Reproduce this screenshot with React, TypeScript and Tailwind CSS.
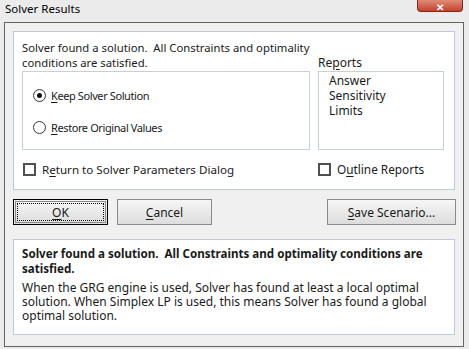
import React from "react";

const Key = ({ children }: { children: React.ReactNode }) => <span className="underline underline-offset-[2px]">{children}</span>;

const Radio = ({ checked, children }: { checked?: boolean; children: React.ReactNode }) => (
  <div className="flex h-[15px] items-center gap-[5px]">
    <div className="flex h-[13px] w-[13px] items-center justify-center rounded-full border-[1.5px] border-[#333] bg-white">
      {checked && <div className="h-[5px] w-[5px] rounded-full bg-[#111]" />}
    </div>
    <span className="text-[11px] tracking-[-0.4px]">{children}</span>
  </div>
);

const Checkbox = ({ children, size }: { children: React.ReactNode; size: string }) => (
  <div className="flex h-[13px] items-center gap-[6px]">
    <div className="h-[13px] w-[13px] border-2 border-[#505050] bg-white" />
    <span className={size}>{children}</span>
  </div>
);

const Button = ({ children, width, focused }: { children: React.ReactNode; width: string; focused?: boolean }) => (
  <div
    className={`${width} flex h-[26px] items-center justify-center bg-gradient-to-b from-[#f6f6f6] to-[#dddddd] ${
      focused ? "border border-black p-[1px]" : "border border-[#8a8a8a]"
    }`}
  >
    {focused ? (
      <div className="flex h-full w-full items-center justify-center border border-[#8a8a8a] p-[1px]">
        <div className="flex h-full w-full items-center justify-center border border-dotted border-black">{children}</div>
      </div>
    ) : (
      children
    )}
  </div>
);

export default function App() {
  return (
    <div className="relative h-[349px] w-[469px] overflow-hidden bg-[#ebebeb] text-[12px] leading-[15px] text-[#1a1a1a]" style={{ fontFamily: '"Noto Sans", sans-serif' }}>
      {/* Title bar */}
      <div className="flex h-[22px] items-start pl-[5px] pt-[1px] text-[11.5px] text-black">Solver Results</div>
      <div className="absolute right-[6px] top-0 flex h-[12px] w-[46px] items-end justify-center rounded-b-[4px] border border-t-0 border-[#7a2a20] bg-gradient-to-b from-[#e08a78] to-[#c2402a]">
        <span className="text-[10px] font-bold leading-[8px] text-white">✕</span>
      </div>

      {/* Frame */}
      <div className="ml-[4px] flex h-[325px] w-[460px] flex-col border border-[#646464] bg-[#f0f0f0] px-[8px] pt-[8px]">
        {/* Top panel */}
        <div className="flex h-[159px] flex-col border border-[#bccbdb] bg-white px-[8px] pt-[8px]">
          <p className="text-[11.3px]">Solver found a solution.&nbsp; All Constraints and optimality</p>
          <div className="flex">
            <span className="w-[296px] text-[11.3px]">conditions are satisfied.</span>
            <span>
              Re<Key>p</Key>orts
            </span>
          </div>
          <div className="mt-[1px] flex">
            <div className="flex h-[79px] w-[288px] flex-col gap-[17px] border border-[#c5d0dc] pl-[10px] pt-[16px]">
              <Radio checked>
                <Key>K</Key>eep Solver Solution
              </Radio>
              <Radio>
                <Key>R</Key>estore Original Values
              </Radio>
            </div>
            <div className="ml-[8px] flex h-[79px] w-[126px] flex-col border border-[#c5d0dc] pl-[10px] pt-[1px]">
              <span>Answer</span>
              <span>Sensitivity</span>
              <span>Limits</span>
            </div>
          </div>
          <div className="mt-[13px] flex">
            <div className="w-[296px] pl-[1px]">
              <Checkbox size="text-[11.6px]">
                R<Key>e</Key>turn to Solver Parameters Dialog
              </Checkbox>
            </div>
            <Checkbox size="text-[11.8px]">
              O<Key>u</Key>tline Reports
            </Checkbox>
          </div>
        </div>

        {/* Buttons */}
        <div className="mt-[9px] flex">
          <Button width="w-[95px]" focused>
            <Key>O</Key>K
          </Button>
          <div className="ml-[9px]">
            <Button width="w-[95px]">
              <Key>C</Key>ancel
            </Button>
          </div>
          <div className="ml-auto mr-[-1px]">
            <Button width="w-[129px]">
              <Key>S</Key>ave Scenario...
            </Button>
          </div>
        </div>

        {/* Bottom panel */}
        <div className="mt-[14px] h-[96px] border border-[#bccbdb] bg-white px-[8px] pt-[6px]">
          <p className="text-[11.6px] font-bold leading-[15px]">Solver found a solution.&nbsp; All Constraints and optimality conditions are satisfied.</p>
          <p className="mt-[5px] leading-[14px]">
            When the GRG engine is used, Solver has found at least a local optimal solution. When Simplex LP is used, this means Solver has found a global optimal solution.
          </p>
        </div>
      </div>
    </div>
  );
}
